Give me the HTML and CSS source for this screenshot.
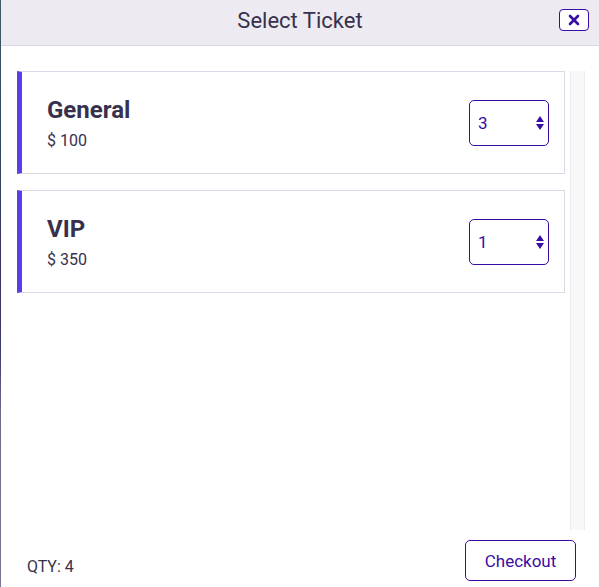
FILE: index.html
```html
<!DOCTYPE html>
<html>
<head>
<meta charset="utf-8">
<link rel="stylesheet" href="styles.css">
</head>
<body>
<div class="edge"></div>
<div class="modal">
  <header class="modal-header">
    <h1 class="modal-title">Select Ticket</h1>
    <button class="close-btn" aria-label="Close">
      <svg width="12" height="12" viewBox="0 0 12 12"><path d="M2 2L10 10M10 2L2 10" stroke="#3a0ca3" stroke-width="2.6" stroke-linecap="round"/></svg>
    </button>
  </header>
  <div class="modal-body">
    <div class="ticket-list">
      <div class="ticket">
        <div class="ticket-info">
          <div class="ticket-name">General</div>
          <div class="ticket-price">$ 100</div>
        </div>
        <div class="qty-select">
          <span class="qty-value">3</span>
          <svg class="arrows" width="8" height="16" viewBox="0 0 8 16"><path d="M4 1L8 7H0Z M4 15L8 9H0Z" fill="#3a0ca3"/></svg>
        </div>
      </div>
      <div class="ticket">
        <div class="ticket-info">
          <div class="ticket-name">VIP</div>
          <div class="ticket-price">$ 350</div>
        </div>
        <div class="qty-select">
          <span class="qty-value">1</span>
          <svg class="arrows" width="8" height="16" viewBox="0 0 8 16"><path d="M4 1L8 7H0Z M4 15L8 9H0Z" fill="#3a0ca3"/></svg>
        </div>
      </div>
    </div>
    <div class="scroll-track"></div>
  </div>
  <footer class="modal-footer">
    <span class="qty-total">QTY: 4</span>
    <button class="checkout-btn">Checkout</button>
  </footer>
</div>
</body>
</html>
```
FILE: styles.css
```css
* { box-sizing: border-box; }
html, body { margin: 0; padding: 0; }
body {
  width: 599px;
  height: 587px;
  display: flex;
  overflow: hidden;
  font-family: Roboto, "Liberation Sans", sans-serif;
  color: #37314d;
  background: #fff;
}
.edge {
  width: 1px;
  flex: none;
  background: linear-gradient(to bottom, #3c5a6a 0%, #2f4d5c 20%, #3a3460 45%, #3b3b70 60%, #6f6a8c 70%, #7a7594 100%);
}
.modal {
  flex: 1;
  display: flex;
  flex-direction: column;
  background: #fff;
}
.modal-header {
  height: 46px;
  flex: none;
  background: #edebf1;
  border-bottom: 1px solid #d9d6e3;
  display: flex;
  align-items: center;
  justify-content: center;
  position: relative;
}
.modal-title {
  margin: 0 0 4px 0;
  font-size: 22px;
  font-weight: 400;
  color: #37314d;
  padding-left: 0;
}
.close-btn {
  position: absolute;
  right: 10px;
  top: 9px;
  width: 30px;
  height: 22px;
  border: 1px solid #3a0ca3;
  border-radius: 4px;
  background: #fff;
  padding: 0;
  display: flex;
  align-items: center;
  justify-content: center;
}
.modal-body {
  flex: 1;
  display: flex;
  padding: 25px 13px 0 16px;
  gap: 5px;
  min-height: 0;
}
.ticket-list {
  width: 548px;
  display: flex;
  flex-direction: column;
  gap: 16px;
}
.ticket {
  height: 103px;
  border: 1px solid #dcd9e6;
  border-left: 5px solid #5b3ee8;
  display: flex;
  align-items: center;
  justify-content: space-between;
  padding: 0 15px 0 25px;
}
.ticket-info { display: flex; flex-direction: column; margin-top: 1px; }
.ticket-name {
  font-size: 24px;
  font-weight: 700;
  line-height: 30px;
  color: #37314d;
}
.ticket-price {
  font-size: 16px;
  line-height: 20px;
  color: #37314d;
  margin-top: 6px;
}
.qty-select {
  width: 80px;
  height: 46px;
  border: 1px solid #3a0ca3;
  border-radius: 5px;
  display: flex;
  align-items: center;
  justify-content: space-between;
  padding: 0 4px 0 8px;
}
.qty-value {
  font-size: 17px;
  color: #3a0ca3;
}
.scroll-track {
  width: 15px;
  flex: none;
  background: #f8f8f8;
  border-left: 1px solid #ececec;
  border-right: 1px solid #ececec;
}
.modal-footer {
  height: 57px;
  flex: none;
  display: flex;
  align-items: flex-start;
  justify-content: space-between;
  padding: 10px 23px 0 26px;
}
.qty-total {
  font-size: 16px;
  color: #37314d;
  margin-top: 17px;
}
.checkout-btn {
  width: 111px;
  height: 41px;
  border: 1px solid #3a0ca3;
  border-radius: 5px;
  background: #fff;
  color: #3a0ca3;
  font-family: Roboto, "Liberation Sans", sans-serif;
  font-size: 17px;
  padding: 0;
}
```
